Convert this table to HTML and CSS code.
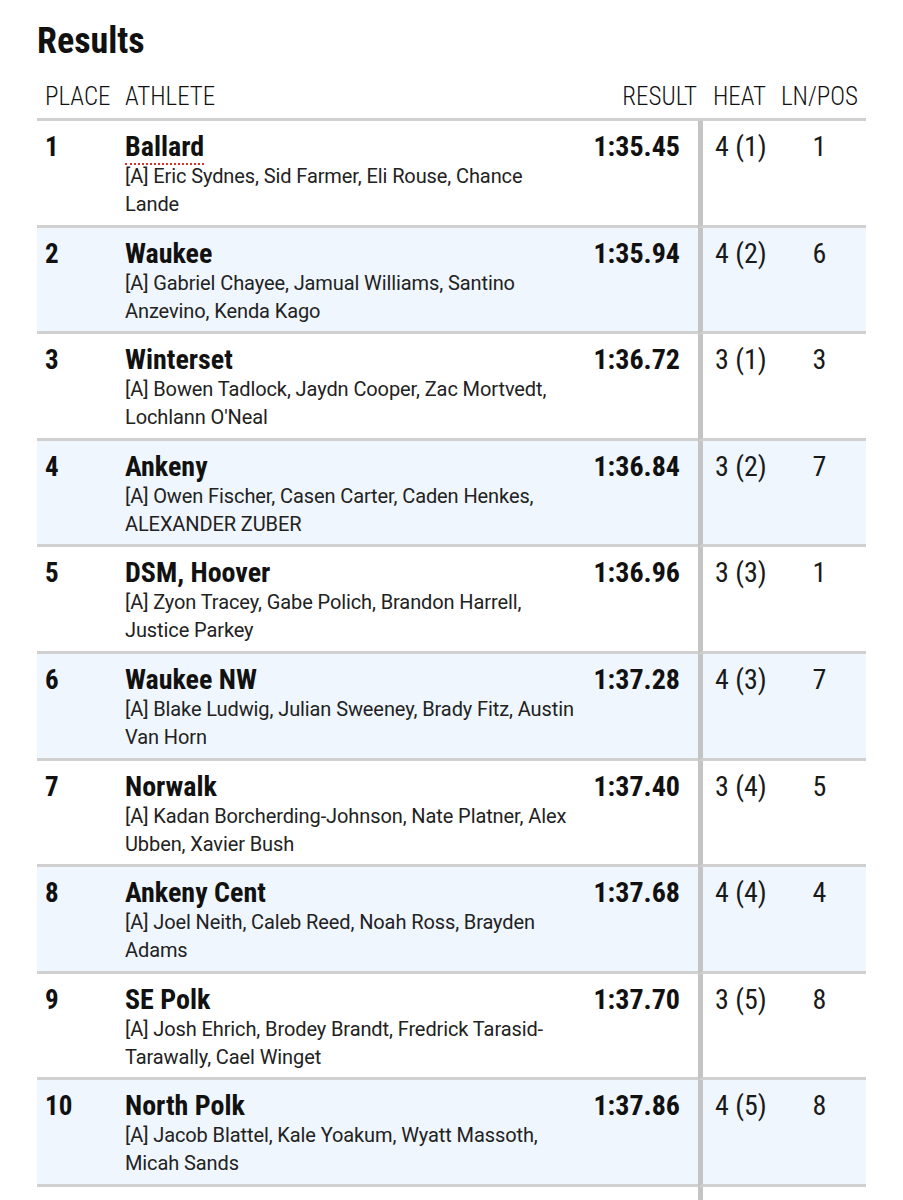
FILE: index.html
```html
<!DOCTYPE html>
<html lang="en">
<head>
<meta charset="utf-8">
<title>Results</title>
<link rel="stylesheet" href="styles.css">
</head>
<body>
<main class="page">
  <h1 class="title">Results</h1>
  <table class="results">
    <thead>
      <tr>
        <th class="c-place">PLACE</th>
        <th class="c-athlete">ATHLETE</th>
        <th class="c-result">RESULT</th>
        <th class="c-heat">HEAT</th>
        <th class="c-lane">LN/POS</th>
      </tr>
    </thead>
    <tbody>
      <tr>
        <td class="c-place">1</td>
        <td class="c-athlete"><div class="team"><span class="flag">Ballard</span></div><div class="names">[A] Eric Sydnes, Sid Farmer, Eli Rouse, Chance<br>Lande</div></td>
        <td class="c-result">1:35.45</td>
        <td class="c-heat">4 (1)</td>
        <td class="c-lane">1</td>
      </tr>
      <tr>
        <td class="c-place">2</td>
        <td class="c-athlete"><div class="team">Waukee</div><div class="names">[A] Gabriel Chayee, Jamual Williams, Santino<br>Anzevino, Kenda Kago</div></td>
        <td class="c-result">1:35.94</td>
        <td class="c-heat">4 (2)</td>
        <td class="c-lane">6</td>
      </tr>
      <tr>
        <td class="c-place">3</td>
        <td class="c-athlete"><div class="team">Winterset</div><div class="names">[A] Bowen Tadlock, Jaydn Cooper, Zac Mortvedt,<br>Lochlann O'Neal</div></td>
        <td class="c-result">1:36.72</td>
        <td class="c-heat">3 (1)</td>
        <td class="c-lane">3</td>
      </tr>
      <tr>
        <td class="c-place">4</td>
        <td class="c-athlete"><div class="team">Ankeny</div><div class="names">[A] Owen Fischer, Casen Carter, Caden Henkes,<br>ALEXANDER ZUBER</div></td>
        <td class="c-result">1:36.84</td>
        <td class="c-heat">3 (2)</td>
        <td class="c-lane">7</td>
      </tr>
      <tr>
        <td class="c-place">5</td>
        <td class="c-athlete"><div class="team">DSM, Hoover</div><div class="names">[A] Zyon Tracey, Gabe Polich, Brandon Harrell,<br>Justice Parkey</div></td>
        <td class="c-result">1:36.96</td>
        <td class="c-heat">3 (3)</td>
        <td class="c-lane">1</td>
      </tr>
      <tr>
        <td class="c-place">6</td>
        <td class="c-athlete"><div class="team">Waukee NW</div><div class="names">[A] Blake Ludwig, Julian Sweeney, Brady Fitz, Austin<br>Van Horn</div></td>
        <td class="c-result">1:37.28</td>
        <td class="c-heat">4 (3)</td>
        <td class="c-lane">7</td>
      </tr>
      <tr>
        <td class="c-place">7</td>
        <td class="c-athlete"><div class="team">Norwalk</div><div class="names">[A] Kadan Borcherding-Johnson, Nate Platner, Alex<br>Ubben, Xavier Bush</div></td>
        <td class="c-result">1:37.40</td>
        <td class="c-heat">3 (4)</td>
        <td class="c-lane">5</td>
      </tr>
      <tr>
        <td class="c-place">8</td>
        <td class="c-athlete"><div class="team">Ankeny Cent</div><div class="names">[A] Joel Neith, Caleb Reed, Noah Ross, Brayden<br>Adams</div></td>
        <td class="c-result">1:37.68</td>
        <td class="c-heat">4 (4)</td>
        <td class="c-lane">4</td>
      </tr>
      <tr>
        <td class="c-place">9</td>
        <td class="c-athlete"><div class="team">SE Polk</div><div class="names">[A] Josh Ehrich, Brodey Brandt, Fredrick Tarasid-<br>Tarawally, Cael Winget</div></td>
        <td class="c-result">1:37.70</td>
        <td class="c-heat">3 (5)</td>
        <td class="c-lane">8</td>
      </tr>
      <tr>
        <td class="c-place">10</td>
        <td class="c-athlete"><div class="team">North Polk</div><div class="names">[A] Jacob Blattel, Kale Yoakum, Wyatt Massoth,<br>Micah Sands</div></td>
        <td class="c-result">1:37.86</td>
        <td class="c-heat">4 (5)</td>
        <td class="c-lane">8</td>
      </tr>
      <tr>
        <td class="c-place">11</td>
        <td class="c-athlete"><div class="team">Johnston</div><div class="names">[A]<br>&nbsp;</div></td>
        <td class="c-result">1:38.02</td>
        <td class="c-heat">4 (6)</td>
        <td class="c-lane">2</td>
      </tr>
    </tbody>
  </table>
</main>
</body>
</html>
```

FILE: styles.css
```css
* {
  box-sizing: border-box;
}

html, body {
  margin: 0;
  padding: 0;
  background: #ffffff;
}

body {
  font-family: Roboto, "Noto Sans", "Liberation Sans", sans-serif;
  color: #111111;
}

.page {
  padding: 19px 37px 0 37px;
}

.title {
  margin: 0;
  font-family: "Roboto Condensed", Roboto, sans-serif;
  font-stretch: condensed;
  font-size: 36px;
  line-height: 44px;
  font-weight: 700;
  color: #111111;
}

.results {
  width: 829px;
  table-layout: fixed;
  border-collapse: separate;
  border-spacing: 0;
}

.results th {
  font-family: "Roboto Condensed", Roboto, sans-serif;
  font-stretch: condensed;
  font-weight: 300;
  font-size: 25px;
  line-height: 30px;
  text-align: left;
  padding: 19px 0 6px 8px;
  border-bottom: 3px solid #d0d0d0;
  white-space: nowrap;
  vertical-align: bottom;
}

.results td {
  vertical-align: top;
  padding: 11px 0 6.6px 8px;
  border-bottom: 3px solid #d0d0d0;
  font-family: "Roboto Condensed", Roboto, sans-serif;
  font-stretch: condensed;
  font-size: 28px;
  line-height: 30px;
}

.results tbody tr:nth-child(even) {
  background: #eff6fd;
}

.results .c-place {
  width: 80px;
}

.results td.c-place {
  font-weight: 700;
  font-size: 27px;
}

.results .c-athlete {
  width: 468px;
}

.results .c-result {
  width: 113px;
  text-align: right;
}

.results th.c-result {
  padding-right: 1px;
}

.results td.c-result {
  padding-right: 18px;
  font-weight: 700;
}

.results .c-heat {
  width: 75px;
}

.results th.c-heat {
  padding-left: 15px;
}

.results td.c-heat {
  border-left: 5px solid #c4c4c4;
  padding-left: 12px;
  font-weight: 400;
  color: #1a1a1a;
  white-space: nowrap;
}

.results .c-lane {
  width: 93px;
  text-align: center;
  padding-left: 0;
}

.results th.c-lane {
  text-align: center;
}

.results td.c-lane {
  font-weight: 400;
  color: #1a1a1a;
}

.team {
  font-weight: 700;
  font-size: 28px;
  line-height: 30px;
  white-space: nowrap;
}

.flag {
  position: relative;
}

.flag::after {
  content: "";
  position: absolute;
  left: 0;
  right: 0;
  bottom: -2px;
  border-top: 2px dotted #d7332d;
}

.names {
  font-family: Roboto, "Noto Sans", sans-serif;
  font-stretch: normal;
  font-size: 20px;
  line-height: 28px;
  font-weight: 400;
  letter-spacing: -0.1px;
  color: #222222;
  white-space: nowrap;
}
```
